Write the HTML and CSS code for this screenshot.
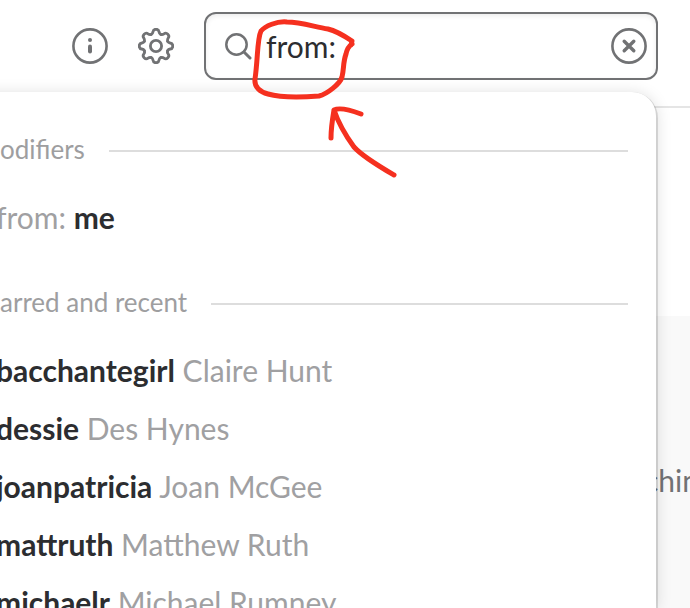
FILE: index.html
```html
<!DOCTYPE html>
<html lang="en">

<head>
    <meta charset="UTF-8">
    <meta name="viewport" content="width=device-width, initial-scale=1.0">
    <title>Search</title>
    <link rel="stylesheet" href="styles.css">
</head>

<body>
    <header class="topbar">
        <button type="button" class="icon-button" aria-label="Channel details">
            <svg width="36" height="36" viewBox="0 0 36 36" fill="none" stroke="currentColor" stroke-linecap="round">
                <circle cx="18" cy="18" r="16.6" stroke-width="2.6" />
                <circle cx="18" cy="12" r="2" fill="currentColor" stroke="none" />
                <path d="M18 18.500v5" stroke-width="4" />
            </svg>
        </button>
        <button type="button" class="icon-button" aria-label="Settings">
            <svg width="36" height="36" viewBox="-18 -18 36 36" fill="none" stroke="currentColor" stroke-width="2.8" stroke-linecap="round">
                <defs>
                    <path id="tooth" d="M-4.800 -11.600C-3.500 -12.200 -3.200 -12.800 -3 -14.200C-2.600 -17.600 2.600 -17.600 3 -14.200C3.200 -12.800 3.500 -12.200 4.800 -11.600" />
                </defs>
                <use href="#tooth" />
                <use href="#tooth" transform="rotate(45)" />
                <use href="#tooth" transform="rotate(90)" />
                <use href="#tooth" transform="rotate(135)" />
                <use href="#tooth" transform="rotate(180)" />
                <use href="#tooth" transform="rotate(225)" />
                <use href="#tooth" transform="rotate(270)" />
                <use href="#tooth" transform="rotate(315)" />
                <circle r="5.600" />
            </svg>
        </button>
        <form class="search">
            <svg width="28" height="28" viewBox="0 0 28 28" fill="none" stroke="currentColor" stroke-linecap="round">
                <circle cx="12.500" cy="12.500" r="10.200" stroke-width="2.500" />
                <path d="M20 20l6 6" stroke-width="3" />
            </svg>
            <input type="text" class="search-input" aria-label="Search" value="from:">
            <button type="button" class="icon-button" aria-label="Clear search">
                <svg width="36" height="36" viewBox="0 0 36 36" fill="none" stroke="currentColor" stroke-linecap="round">
                    <circle cx="18" cy="18" r="16.600" stroke-width="2.600" />
                    <path d="M13.200 13.200l9.600 9.600M22.800 13.200l-9.600 9.600" stroke-width="3.400" />
                </svg>
            </button>
        </form>
    </header>

    <main class="content">
        <div class="message-pane">
            <p>chin</p>
        </div>
    </main>

    <section class="suggestions">
        <h2>odifiers</h2>
        <ul>
            <li>from: <b>me</b></li>
        </ul>
        <h2>arred and recent</h2>
        <ul>
            <li><b>bacchantegirl</b> Claire Hunt</li>
            <li><b>dessie</b> Des Hynes</li>
            <li><b>joanpatricia</b> Joan McGee</li>
            <li><b>mattruth</b> Matthew Ruth</li>
            <li><b>michaelr</b> Michael Rumney</li>
        </ul>
    </section>

    <!-- hand-drawn marker over the search box -->
    <svg class="marker" width="160" height="170" viewBox="245 15 160 170" fill="none" stroke="#f5301f" stroke-width="5" stroke-linecap="round" stroke-linejoin="round" aria-hidden="true">
        <path d="M351 45L352 41C346 37 337 31 328 29C315 27 301 22 287 22C277 21 265 26 261 31C257 39 258 59 255 79C254 87 260 92 268 94C282 98 306 97 319 96C327 94 340 84 342 77C344 69 343 62 346 54C347 49 349 46 352 44" />
        <path d="M331 138C331 127 333 116 334 110C340 107 353 111 361 114M334 110C338 122 346 136 354 147C363 157 382 168 394 175" />
    </svg>
</body>

</html>
```

FILE: styles.css
```css
* {
    box-sizing: border-box;
}

body {
    margin: 0;
    height: 100vh;
    display: flex;
    flex-direction: column;
    position: relative;
    overflow: hidden;
    font-family: Lato, sans-serif;
    font-size: 30px;
    color: #2c2d30;
    background-color: #fff;
}

.topbar {
    display: flex;
    flex: none;
    align-items: center;
    gap: 30px;
    height: 108px;
    padding: 0 32px 14px 72px;
    border-bottom: 2px solid #e5e5e5;
}

.icon-button {
    display: flex;
    flex: none;
    padding: 0;
    border: none;
    background: none;
    color: #717274;
    cursor: pointer;
}

.search {
    display: flex;
    flex: 1;
    align-items: center;
    gap: 14px;
    min-width: 0;
    height: 68px;
    padding: 0 9px 0 18px;
    border: 2px solid #717274;
    border-radius: 12px;
    box-shadow: inset 0 2px 5px rgba(0, 0, 0, 0.08);
    color: #717274;
}

.search svg {
    flex: none;
}

.search-input {
    flex: 1;
    min-width: 0;
    height: 44px;
    padding: 0;
    border: none;
    outline: none;
    background: none;
    font: inherit;
    color: #2c2d30;
}

.content {
    display: flex;
    flex: 1;
    padding-top: 208px;
}

.message-pane {
    flex: 1;
    padding-top: 146px;
    background-color: #f9f9f9;
    color: #717274;
    text-align: right;
}

.message-pane p {
    margin: 0 -9px 0 0;
    line-height: 36px;
}

.suggestions {
    position: absolute;
    top: 92px;
    right: 34px;
    bottom: 0;
    left: -32px;
    padding: 39px 28px 0 32px;
    overflow: hidden;
    border-radius: 24px 24px 0 0;
    background-color: #fff;
    box-shadow: 0 2px 0 2px rgba(0, 0, 0, 0.12), 0 2px 16px rgba(0, 0, 0, 0.15);
}

.suggestions h2 {
    display: flex;
    align-items: center;
    gap: 24px;
    margin: 0;
    font-size: 26px;
    font-weight: 400;
    line-height: 36px;
    color: #9e9ea0;
}

.suggestions h2::after {
    content: "";
    flex: 1;
    height: 2px;
    margin-top: 4px;
    background-color: #ddd;
}

.suggestions ul {
    margin: 0 0 0 -4px;
    padding: 21px 0 38px;
    list-style: none;
}

.suggestions li {
    line-height: 58px;
    color: #a0a0a2;
    white-space: nowrap;
}

.suggestions b {
    color: #2c2d30;
}

.marker {
    position: absolute;
    top: 15px;
    left: 245px;
}
```
